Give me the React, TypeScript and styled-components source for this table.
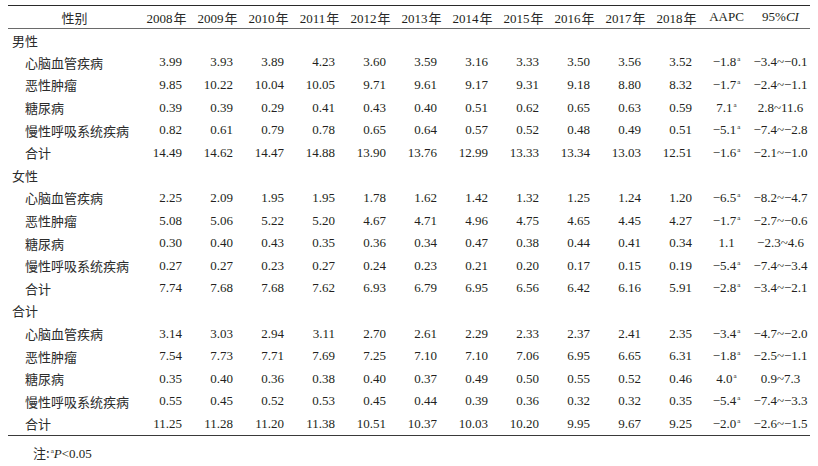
import React from "react";
import styled, { createGlobalStyle } from "styled-components";

const Global = createGlobalStyle`
  html, body { margin: 0; padding: 0; background: #fff; }
  body { font-family: "Liberation Serif", "Noto Sans CJK SC", serif; color: #231f20; }
`;

const Page = styled.div`
  padding: 5px 0 0 8px;
  width: 818px;
  box-sizing: border-box;
`;

const Table = styled.table`
  width: 802px;
  border-collapse: collapse;
  table-layout: fixed;
  font-size: 13px;
`;

const HeadRow = styled.tr`
  height: 23px;
  border-top: 1.5px solid #2a2a2a;
  border-bottom: 1.5px solid #6a6a6a;
`;

const Th = styled.th`
  font-weight: normal;
  text-align: center;
  padding: 0;
  white-space: nowrap;
  font-family: "Liberation Serif", "Noto Sans CJK SC", serif;
`;

const Row = styled.tr<{ $last?: boolean }>`
  height: 22.6px;
  border-bottom: ${(p) => (p.$last ? "1.5px solid #3a3a3a" : "none")};
`;

const Label = styled.td<{ $group?: boolean }>`
  padding: 0 0 0 ${(p) => (p.$group ? 4 : 17)}px;
  white-space: nowrap;
  font-family: "Noto Sans CJK SC", sans-serif;
  font-size: 13px;
  color: #2b2b2b;
`;

const Num = styled.td`
  text-align: right;
  padding: 0 10px 0 0;
  white-space: nowrap;
`;

const Center = styled.td`
  text-align: center;
  padding: 0;
  white-space: nowrap;
`;

const Sup = styled.sup`
  font-size: 7px;
  vertical-align: 5px;
  line-height: 0;
  margin-left: 1px;
`;

const Note = styled.div`
  padding: 7px 0 0 25px;
  font-size: 13px;
  font-family: "Liberation Serif", "Noto Sans CJK SC", serif;
`;

const Cjk = styled.span<{ $gap?: number }>`
  font-family: "Noto Sans CJK SC", sans-serif;
  color: #2b2b2b;
  margin-left: ${(p) => p.$gap ?? 0}px;
`;

const years = [2008, 2009, 2010, 2011, 2012, 2013, 2014, 2015, 2016, 2017, 2018];

type Item = { name: string; vals: string[]; aapc: string; sig: boolean; ci: string };
type Group = { name: string; items: Item[] };

const groups: Group[] = [
  {
    name: "男性",
    items: [
      { name: "心脑血管疾病", vals: ["3.99", "3.93", "3.89", "4.23", "3.60", "3.59", "3.16", "3.33", "3.50", "3.56", "3.52"], aapc: "−1.8", sig: true, ci: "−3.4~−0.1" },
      { name: "恶性肿瘤", vals: ["9.85", "10.22", "10.04", "10.05", "9.71", "9.61", "9.17", "9.31", "9.18", "8.80", "8.32"], aapc: "−1.7", sig: true, ci: "−2.4~−1.1" },
      { name: "糖尿病", vals: ["0.39", "0.39", "0.29", "0.41", "0.43", "0.40", "0.51", "0.62", "0.65", "0.63", "0.59"], aapc: "7.1", sig: true, ci: "2.8~11.6" },
      { name: "慢性呼吸系统疾病", vals: ["0.82", "0.61", "0.79", "0.78", "0.65", "0.64", "0.57", "0.52", "0.48", "0.49", "0.51"], aapc: "−5.1", sig: true, ci: "−7.4~−2.8" },
      { name: "合计", vals: ["14.49", "14.62", "14.47", "14.88", "13.90", "13.76", "12.99", "13.33", "13.34", "13.03", "12.51"], aapc: "−1.6", sig: true, ci: "−2.1~−1.0" },
    ],
  },
  {
    name: "女性",
    items: [
      { name: "心脑血管疾病", vals: ["2.25", "2.09", "1.95", "1.95", "1.78", "1.62", "1.42", "1.32", "1.25", "1.24", "1.20"], aapc: "−6.5", sig: true, ci: "−8.2~−4.7" },
      { name: "恶性肿瘤", vals: ["5.08", "5.06", "5.22", "5.20", "4.67", "4.71", "4.96", "4.75", "4.65", "4.45", "4.27"], aapc: "−1.7", sig: true, ci: "−2.7~−0.6" },
      { name: "糖尿病", vals: ["0.30", "0.40", "0.43", "0.35", "0.36", "0.34", "0.47", "0.38", "0.44", "0.41", "0.34"], aapc: "1.1", sig: false, ci: "−2.3~4.6" },
      { name: "慢性呼吸系统疾病", vals: ["0.27", "0.27", "0.23", "0.27", "0.24", "0.23", "0.21", "0.20", "0.17", "0.15", "0.19"], aapc: "−5.4", sig: true, ci: "−7.4~−3.4" },
      { name: "合计", vals: ["7.74", "7.68", "7.68", "7.62", "6.93", "6.79", "6.95", "6.56", "6.42", "6.16", "5.91"], aapc: "−2.8", sig: true, ci: "−3.4~−2.1" },
    ],
  },
  {
    name: "合计",
    items: [
      { name: "心脑血管疾病", vals: ["3.14", "3.03", "2.94", "3.11", "2.70", "2.61", "2.29", "2.33", "2.37", "2.41", "2.35"], aapc: "−3.4", sig: true, ci: "−4.7~−2.0" },
      { name: "恶性肿瘤", vals: ["7.54", "7.73", "7.71", "7.69", "7.25", "7.10", "7.10", "7.06", "6.95", "6.65", "6.31"], aapc: "−1.8", sig: true, ci: "−2.5~−1.1" },
      { name: "糖尿病", vals: ["0.35", "0.40", "0.36", "0.38", "0.40", "0.37", "0.49", "0.50", "0.55", "0.52", "0.46"], aapc: "4.0", sig: true, ci: "0.9~7.3" },
      { name: "慢性呼吸系统疾病", vals: ["0.55", "0.45", "0.52", "0.53", "0.45", "0.44", "0.39", "0.36", "0.32", "0.32", "0.35"], aapc: "−5.4", sig: true, ci: "−7.4~−3.3" },
      { name: "合计", vals: ["11.25", "11.28", "11.20", "11.38", "10.51", "10.37", "10.03", "10.20", "9.95", "9.67", "9.25"], aapc: "−2.0", sig: true, ci: "−2.6~−1.5" },
    ],
  },
];

export default function App() {
  return (
    <Page>
      <Global />
      <Table>
        <colgroup>
          <col style={{ width: 133 }} />
          {years.map((y) => (
            <col key={y} style={{ width: 51 }} />
          ))}
          <col style={{ width: 49 }} />
          <col style={{ width: 59 }} />
        </colgroup>
        <thead>
          <HeadRow>
            <Th>
              <Cjk>性别</Cjk>
            </Th>
            {years.map((y) => (
              <Th key={y}>
                {y}
                <Cjk $gap={1}>年</Cjk>
              </Th>
            ))}
            <Th>AAPC</Th>
            <Th>
              95%<i>CI</i>
            </Th>
          </HeadRow>
        </thead>
        <tbody>
          {groups.map((g, gi) => (
            <React.Fragment key={gi}>
              <Row>
                <Label $group>{g.name}</Label>
                <td colSpan={13} />
              </Row>
              {g.items.map((it, ii) => (
                <Row key={ii} $last={gi === groups.length - 1 && ii === g.items.length - 1}>
                  <Label>{it.name}</Label>
                  {it.vals.map((v, vi) => (
                    <Num key={vi}>{v}</Num>
                  ))}
                  <Center>
                    {it.aapc}
                    {it.sig && <Sup>a</Sup>}
                  </Center>
                  <Center>{it.ci}</Center>
                </Row>
              ))}
            </React.Fragment>
          ))}
        </tbody>
      </Table>
      <Note>
        <Cjk>注:</Cjk>
        <Sup>a</Sup>
        <i>P</i>&lt;0.05
      </Note>
    </Page>
  );
}
